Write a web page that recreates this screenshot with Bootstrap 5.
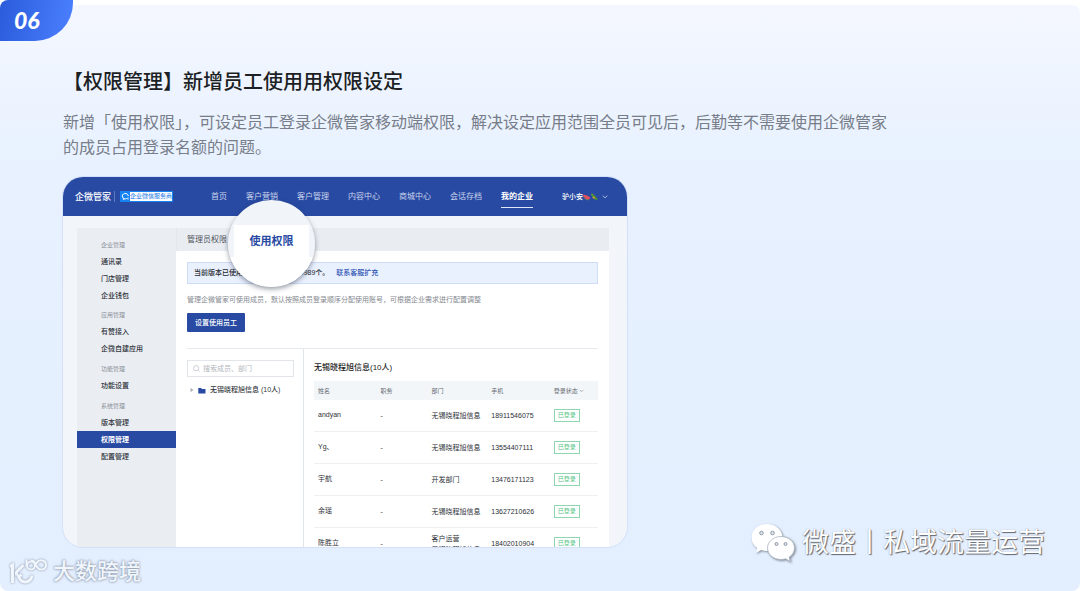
<!DOCTYPE html>
<html lang="zh-CN">
<head>
<meta charset="utf-8">
<meta name="viewport" content="width=device-width, initial-scale=1">
<title>权限管理</title>
<link href="https://cdn.jsdelivr.net/npm/bootstrap@5.3.0/dist/css/bootstrap.min.css" rel="stylesheet">
<style>
  :root { --brand: #284aa3; --soft: #eaeef3; --pale: #f2f6fa; --ink: #34373d; }
  body { font-family: "Liberation Sans", "Noto Sans CJK SC", sans-serif; background: #fff; }
  a { text-decoration: none; }
  .sheet { min-height: 100vh; padding: 5px 0 0; }
  .sheet-bg { min-height: calc(100vh - 5px); padding: 63px 63px 44px;
    background: linear-gradient(#f4f7ff, #e7f1ff 28%, #e3eefe); border-radius: 8px; }
  .num { top: 0; left: 0; padding: 5px 33px 6px 14px; font: italic 900 23px/30px Lato, sans-serif; color: #fff;
    background: linear-gradient(100deg, #2a5cdb, #4b80ff); border-radius: 8px 0 38px 0; }
  .headline { font-size: 20px; line-height: 28px; font-weight: 500; color: #1c1f24; margin-bottom: 14px; }
  .intro { font-size: 16px; line-height: 25px; color: #777d89; margin-bottom: 17px; }

  .shot { max-width: 564px; height: 370px; border-radius: 20px; overflow: hidden; background: var(--pale);
    box-shadow: 0 0 0 1px #d3e0f8; font-size: 7px; line-height: 10px; color: var(--ink); }
  .topbar { background: var(--brand); height: 39px; padding: 0 19px 0 12px; color: #fff; }
  .brand { font-size: 9px; font-weight: 500; color: #fff; }
  .cert { margin-left: 3px; padding-left: 5px; border-left: 1px solid #5f79bd; }
  .cert-icon { background: #1683f3; width: 10px; height: 11px; }
  .cert-text { background: #fff; color: #1976e6; font-size: 6px; line-height: 9px; height: 11px; border: 1px solid #1683f3; border-left: 0; }
  .menu { margin-left: 38px; gap: 19px; font-size: 8px; }
  .menu a { color: #c9d3ec; padding: 7px 0 5px; border-bottom: 1px solid transparent; white-space: nowrap; }
  .menu a.active { color: #fff; font-weight: 700; border-color: #dfe6f6; }
  .user { border: 0; background: none; padding: 0; color: #fff; font-size: 7px; font-weight: 500; }

  .inner { padding: 12px 18px 0 14px; height: 331px; }
  .side { background: var(--soft); flex: 0 0 99px; padding-top: 9px; }
  .side h2 { font-size: 6px; line-height: 16px; color: #8b9099; margin: 0; padding-left: 24px; font-weight: 400; }
  .side a { display: block; line-height: 17px; padding-left: 24px; color: #2f3339; font-weight: 500; }
  .side ul { margin: 0 0 4px; }
  .side ul.tight { margin-bottom: 3px; }
  .side a.active { background: var(--brand); color: #fff; font-weight: 700; }
  .main { background: #fff; min-width: 0; }
  .strip { background: #e9edf2; height: 23px; padding: 0 10px; font-size: 8px; color: #50545b; border-left: 1px solid #e2e7ee; }
  .content { padding: 11px 11px 0 11px; }
  .notice { border: 1px solid #cfdcf8; background: #e9f0fe; height: 22px; padding: 0 6px; font-weight: 500; color: #25282d; }
  .notice a { color: #2f55b4; margin-left: 7px; }
  .hint { color: #858990; margin: 11px 0 8px; }
  .set-btn { background: var(--brand); color: #fff; border: 0; border-radius: 1px; font-size: 7px; line-height: 11px; padding: 4px 8px; font-weight: 500; }
  .panes { border-top: 1px solid #e6e9ed; margin-top: 16px; height: 200px; }
  .tree { flex: 0 0 117px; padding: 11px 9px 0 0; border-right: 1px solid #e0e5ea; }
  .find { border: 1px solid #e2e5e9; height: 17px; padding: 0 5px; gap: 3px; }
  .find input { border: 0; outline: 0; padding: 0; font-size: 7px; line-height: 12px; min-width: 0; width: 100%; background: none; }
  .find input::placeholder { color: #b4b8be; }
  .node { margin-top: 8px; gap: 4px; padding-left: 3px; font-weight: 500; color: #33373d; }
  .people { padding: 14px 0 0 10px; min-width: 0; }
  .people h3 { font-size: 8px; line-height: 10px; font-weight: 500; color: #222; margin: 0 0 8px; }
  .roster { width: 100%; table-layout: fixed; border-collapse: separate; border-spacing: 0; }
  .roster th { height: 19px; background: #f2f6f9; font-size: 6px; font-weight: 400; color: #666b73; padding: 0 4px; }
  .roster td { height: 32px; padding: 0 0 0 4px; border-bottom: 1px solid #eef0f3; white-space: nowrap; color: #2d3036; line-height: 11px; }
  .roster td:first-child { padding-bottom: 3px; }
  .state { display: inline-block; border: 1px solid #8ed7ae; color: #4fc384; font-size: 6px; line-height: 11px; padding: 0 3px; width: 26px; text-align: center; }

  .lens { left: 165px; top: 23px; width: 87px; height: 87px; border-radius: 50%; overflow: hidden; background: linear-gradient(#f1f4f8 57px, #fff 57px); box-shadow: 0 2px 5px rgba(40,50,70,.5); }
  .lens span { margin: 25px 6px 0; height: 33px; background: #fff; color: var(--brand); font-size: 11px; font-weight: 700; }
  .mark-r { right: 35px; bottom: 27px; gap: 6px; font-size: 27px; line-height: 40px; color: #fff; text-shadow: 1px 1px 1px #5f6670, 0 0 1px #8b929c; }
  .mark-l { left: 9px; bottom: 4px; gap: 5px; font-size: 22px; line-height: 30px; font-weight: 500; color: #f1f6fd; text-shadow: 0 0 2px #8290a5, 0 0 3px #9aa6b8; }
</style>
</head>
<body>
<section class="sheet position-relative">
  <div class="sheet-bg">
    <h1 class="headline">【权限管理】新增员工使用用权限设定</h1>
    <p class="intro">新增「使用权限」，可设定员工登录企微管家移动端权限，解决设定应用范围全员可见后，后勤等不需要使用企微管家<br>的成员占用登录名额的问题。</p>

    <div class="position-relative">
      <div class="shot">
        <header class="topbar d-flex align-items-center">
          <a class="brand text-nowrap" href="#">企微管家</a>
          <div class="cert d-flex">
            <span class="cert-icon d-flex align-items-center justify-content-center"><svg width="9" height="9" viewBox="0 0 9 9" fill="none" stroke="#fff"><path d="M5.8 6.5A3 2.7 0 1 1 7.3 4M2.4 6.3V7.5l1.2-.7"/><path d="M6.1 5.8 7.7 7.3M7.7 5.8 6.1 7.3" stroke-width=".7"/></svg></span>
            <span class="cert-text text-nowrap">企业微信服务商</span>
          </div>
          <nav class="menu d-flex">
            <a href="#">首页</a><a href="#">客户营销</a><a href="#">客户管理</a><a href="#">内容中心</a><a href="#">商城中心</a><a href="#">会话存档</a><a class="active" href="#">我的企业</a>
          </nav>
          <button class="user d-flex align-items-center ms-auto text-nowrap" type="button">驴小安
            <svg width="15" height="8" viewBox="0 0 15 8"><path d="M0 2Q3 1 7 4.300 7.500 6.500 4.800 6.700 1.500 6.300 0 2z" fill="#e2505c"/><path d="M.2 3.500Q2 7.400 6 6.700" fill="none" stroke="#6d8f5b" stroke-width=".7"/><path d="m9 1.500 1.500 1.400" stroke="#5b9d3c" stroke-width="2" stroke-linecap="round"/><path d="m10.500 3.200 2.700 2.700" stroke="#4c8a38" stroke-width="2.600" stroke-linecap="round"/><path d="m9.800 3.800 1.800 1.800" stroke="#e8a935" stroke-width="1.300"/></svg>
            <svg class="ms-1" width="6" height="4" viewBox="0 0 6 4" fill="none" stroke="#cbd5ed" stroke-width=".8"><path d="m.7.6 2.3 2.3L5.3.6"/></svg>
          </button>
        </header>

        <div class="inner d-flex">
          <aside class="side">
            <h2>企业管理</h2>
            <ul class="list-unstyled tight"><li><a href="#">通讯录</a></li><li><a href="#">门店管理</a></li><li><a href="#">企业钱包</a></li></ul>
            <h2>应用管理</h2>
            <ul class="list-unstyled"><li><a href="#">有赞接入</a></li><li><a href="#">企微自建应用</a></li></ul>
            <h2>功能管理</h2>
            <ul class="list-unstyled"><li><a href="#">功能设置</a></li></ul>
            <h2>系统管理</h2>
            <ul class="list-unstyled"><li><a href="#">版本管理</a></li><li><a class="active" href="#">权限管理</a></li><li><a href="#">配置管理</a></li></ul>
          </aside>

          <main class="main flex-grow-1">
            <div class="strip d-flex align-items-center">管理员权限</div>
            <div class="content">
              <div class="notice d-flex align-items-center">当前版本已使用10个，还可以使用9989个。<a href="#">联系客服扩充</a></div>
              <p class="hint">管理企微管家可使用成员，默认按照成员登录顺序分配使用账号，可根据企业需求进行配置调整</p>
              <button class="set-btn d-block" type="button">设置使用员工</button>
              <div class="panes d-flex">
                <div class="tree">
                  <label class="find d-flex align-items-center">
                    <svg class="flex-shrink-0" width="7" height="7" viewBox="0 0 7 7" fill="none" stroke="#b8bdc4" stroke-width=".7"><circle cx="3.2" cy="3.2" r="2.6"/><path d="m5.1 5.1 1.4 1.4"/></svg>
                    <input type="text" placeholder="搜索成员、部门" aria-label="搜索成员、部门">
                  </label>
                  <div class="node d-flex align-items-center text-nowrap">
                    <svg width="4" height="6" viewBox="0 0 4 6"><path d="m.5.8 3 2.2-3 2.2z" fill="#aeb2b8"/></svg>
                    <svg width="8" height="7" viewBox="0 0 8 7"><path d="M.3 1h2.8l.8 1h3.6v4.4H.3z" fill="#284aa3"/></svg>
                    <span>无锡晓程旭信息 (10人)</span>
                  </div>
                </div>
                <div class="people flex-grow-1">
                  <h3>无锡晓程旭信息(10人)</h3>
                  <table class="roster">
                    <colgroup><col style="width:22%"><col style="width:18%"><col style="width:21%"><col style="width:22%"><col style="width:17%"></colgroup>
                    <thead><tr><th>姓名</th><th>职务</th><th>部门</th><th>手机</th><th class="text-nowrap">登录状态 <svg width="5" height="4" viewBox="0 0 6 4" fill="none" stroke="#8d929a" stroke-width=".8"><path d="m.7.6 2.3 2.3L5.3.6"/></svg></th></tr></thead>
                    <tbody>
                      <tr><td>andyan</td><td>-</td><td>无锡晓程旭信息</td><td>18911546075</td><td><span class="state">已登录</span></td></tr>
                      <tr><td>Yg、</td><td>-</td><td>无锡晓程旭信息</td><td>13554407111</td><td><span class="state">已登录</span></td></tr>
                      <tr><td>宇航</td><td>-</td><td>开发部门</td><td>13476171123</td><td><span class="state">已登录</span></td></tr>
                      <tr><td>余瑶</td><td>-</td><td>无锡晓程旭信息</td><td>13627210626</td><td><span class="state">已登录</span></td></tr>
                      <tr><td>陈胜立</td><td>-</td><td>客户运营<br>无锡晓程旭信息</td><td>18402010904</td><td><span class="state">已登录</span></td></tr>
                    </tbody>
                  </table>
                </div>
              </div>
            </div>
          </main>
        </div>
      </div>
      <div class="lens position-absolute"><span class="d-flex align-items-center justify-content-center">使用权限</span></div>
    </div>
  </div>

  <div class="num position-absolute">06</div>

  <div class="mark-r position-absolute d-flex align-items-center text-nowrap">
    <svg width="46" height="42" viewBox="0 0 46 42" style="filter:drop-shadow(1px 1px 1px #7d8590)">
      <path d="M17 2C8 2 1.500 8 1.500 15.500c0 4.500 2.200 8 5.800 10.500L5.800 31l5.500-2.900c2 .6 3.700.9 5.700.9 8.500 0 15.500-6 15.500-13.500S25.500 2 17 2z" fill="#fff"/>
      <path d="M31 14.500c-7.500 0-13.500 5.100-13.500 11.500S23.500 37.500 31 37.500c1.700 0 3.200-.2 4.700-.7l4.700 2.700-1.300-4.200c3.300-2.200 5.400-5.500 5.400-9.300 0-6.400-6-11.500-13.500-11.500z" fill="#fff" stroke="#aab4c2" stroke-width=".8"/>
      <g fill="#dce7f6" stroke="#7d8590" stroke-width=".8"><circle cx="11.500" cy="11" r="1.800"/><circle cx="22.500" cy="11" r="1.800"/><circle cx="26.500" cy="22" r="1.500"/><circle cx="35.500" cy="22" r="1.500"/></g>
    </svg>
    <span>微盛丨私域流量运营</span>
  </div>

  <div class="mark-l position-absolute d-flex align-items-center text-nowrap">
    <svg width="39" height="30" viewBox="0 0 39 30" fill="none" stroke="#f1f6fd" stroke-width="3" style="filter:drop-shadow(0 0 1px #8290a5)">
      <path d="M1 9.500 3.500 8v18M14.500 8 8 14.500Q6.500 16 8 18M9 17.500Q10.500 24.500 16 25q6-.3 7-6.500M12.500 17.500l-3 3"/>
      <path d="M17.500 2.500v7" stroke-width="2"/><circle cx="22" cy="8.500" r="4" stroke-width="2"/><path d="M26 9.500Q28 3 32.500 3.200 37 3.800 37 8t-4.500 4.500Q29 12.500 27 8 25.500 3.500 22 3.500" stroke-width="2"/>
    </svg>
    <span>大数跨境</span>
  </div>
</section>
<script src="https://cdn.jsdelivr.net/npm/bootstrap@5.3.0/dist/js/bootstrap.bundle.min.js"></script>
</body>
</html>
